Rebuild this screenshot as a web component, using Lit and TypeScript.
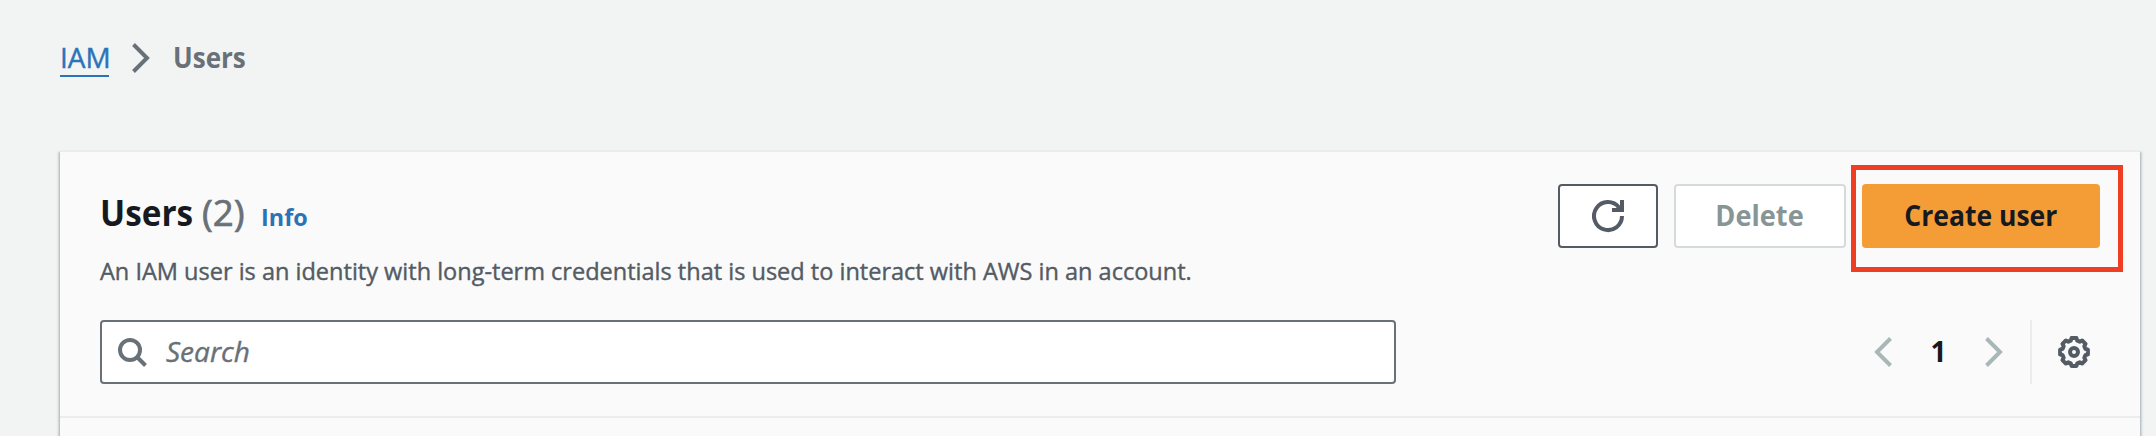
import { LitElement, html, css, svg } from "lit";
import { customElement } from "lit/decorators.js";

const gearPath = (() => {
  const pts: string[] = [];
  for (let i = 0; i < 8; i++) {
    for (const [offset, radius] of [[-10, 14.1], [10, 14.1], [16, 11.8], [29, 11.8]]) {
      const a = ((i * 45 + offset) * Math.PI) / 180;
      pts.push(`${(16 + radius * Math.sin(a)).toFixed(2)} ${(16 - radius * Math.cos(a)).toFixed(2)}`);
    }
  }
  return `M${pts.join("L")}Z`;
})();

const shapes = {
  next: svg`<path d="M8.5 2.5 22 16 8.5 29.5"/>`,
  prev: svg`<path d="M23.5 2.5 10 16 23.5 29.5"/>`,
  search: svg`<circle cx="14" cy="14" r="10"/><path d="M20.5 20.5 29.5 29.5"/>`,
  refresh: svg`<path d="M30 16A14 14 0 1 1 27 7.4L29 10"/><path d="M30 0V10H20"/>`,
  gear: svg`<path stroke-linejoin="round" d=${gearPath}/><circle cx="16" cy="16" r="4"/>`,
};

@customElement("ui-icon")
class UiIcon extends LitElement {
  static properties = { name: { type: String } };
  declare name: keyof typeof shapes;
  static styles = css`
    :host { display: block; width: 32px; height: 32px; flex: none; }
    svg { display: block; fill: none; stroke: currentColor; stroke-width: 4; overflow: visible; }
  `;
  render() {
    return html`<svg width="32" height="32" viewBox="0 0 32 32">${shapes[this.name]}</svg>`;
  }
}

@customElement("app-root")
class AppRoot extends LitElement {
  static styles = css`
    :host {
      display: block; box-sizing: border-box; height: 436px; overflow: hidden;
      padding: 39px 16px 0 60px; background: #f2f4f4; color: #16191f;
      font-family: "Open Sans", "Noto Sans", sans-serif; font-size: 28px;
    }
    * { box-sizing: border-box; }
    .crumbs { display: flex; height: 38px; line-height: 36px; color: #687078; white-space: nowrap; }
    .crumbs a { width: 49px; color: #2a73b8; border-bottom: 2px solid #2a73b8; -webkit-text-stroke: .4px; }
    .crumbs ui-icon { margin: 3px 16px 0 16px; }
    .crumbs b { transform: scaleX(.93); transform-origin: 0 0; }
    .card {
      margin-top: 73px; height: 400px; background: #fafafa; border-top: 2px solid #eaeded;
      box-shadow: 0 2px 2px rgba(0,28,36,.3), 2px 2px 2px rgba(0,28,36,.15), -2px 2px 2px rgba(0,28,36,.15);
    }
    .head { padding: 32px 40px; border-bottom: 2px solid #eaeded; height: 266px; }
    .top { display: flex; justify-content: space-between; height: 136px; }
    .intro { padding-top: 7px; width: 1200px; }
    h1 { display: flex; align-items: baseline; margin: 0; height: 44px; font-size: 36px; line-height: 44px; }
    .title { width: 102px; transform: scaleX(.925); transform-origin: 0 0; }
    .count { width: 59px; color: #687078; font-weight: 400; -webkit-text-stroke: .7px; transform: scaleX(1.02); transform-origin: 0 0; }
    .info { font-size: 24px; line-height: 28px; color: #2a73b8; transform: scaleX(.975); transform-origin: 0 0; }
    p { width: max-content; margin: 18px 0 0; font-size: 24px; line-height: 36px; color: #545b64; white-space: nowrap; -webkit-text-stroke: .4px; transform: scaleX(.98); transform-origin: 0 0; }
    .actions { display: flex; }
    .btn {
      display: flex; align-items: center; justify-content: center; height: 64px; padding: 0 0 2px; margin: 0;
      font: inherit; font-weight: 700; border: 2px solid #545b64; border-radius: 4px; background: #fff; color: #545b64;
    }
    .refresh { width: 100px; padding: 0; }
    .delete { width: 172px; margin-left: 16px; border-color: #d5dbdb; color: #879596; }
    .delete span { transform: scaleX(.97); }
    .primary { position: relative; margin-left: 16px; }
    .create { width: 238px; border-color: #f49d37; background: #f49d37; color: #16191f; }
    .create span { transform: scaleX(.947); white-space: nowrap; }
    .outline { position: absolute; top: -19px; left: -11px; width: 272px; height: 107px; border: 5px solid #ee3f24; pointer-events: none; }
    .tools { display: flex; justify-content: space-between; height: 64px; }
    .search {
      display: flex; align-items: center; width: 1296px; padding-left: 14px; gap: 18px;
      border: 2px solid #687078; border-radius: 4px; background: #fff; color: #687078;
    }
    .search i { line-height: 38px; padding-bottom: 2px; -webkit-text-stroke: .4px; }
    .pager { display: flex; align-items: center; color: #aab7b8; }
    .page { width: 79px; padding-bottom: 2px; text-align: center; font-weight: 700; color: #16191f; }
    .sep { width: 2px; height: 64px; margin: 0 26px 0 20px; background: #eaeded; }
    .gear { color: #545b64; margin-right: 10px; }
  `;
  render() {
    return html`
      <nav class="crumbs"><a>IAM</a><ui-icon name="next"></ui-icon><b>Users</b></nav>
      <section class="card">
        <div class="head">
          <div class="top">
            <div class="intro">
              <h1><span class="title">Users</span><span class="count">(2)</span><a class="info">Info</a></h1>
              <p>An IAM user is an identity with long-term credentials that is used to interact with AWS in an account.</p>
            </div>
            <div class="actions">
              <button class="btn refresh"><ui-icon name="refresh"></ui-icon></button>
              <button class="btn delete"><span>Delete</span></button>
              <div class="primary"><button class="btn create"><span>Create user</span></button><div class="outline"></div></div>
            </div>
          </div>
          <div class="tools">
            <div class="search"><ui-icon name="search"></ui-icon><i>Search</i></div>
            <div class="pager">
              <ui-icon name="prev"></ui-icon><span class="page">1</span><ui-icon name="next"></ui-icon>
              <span class="sep"></span><ui-icon class="gear" name="gear"></ui-icon>
            </div>
          </div>
        </div>
      </section>`;
  }
}
